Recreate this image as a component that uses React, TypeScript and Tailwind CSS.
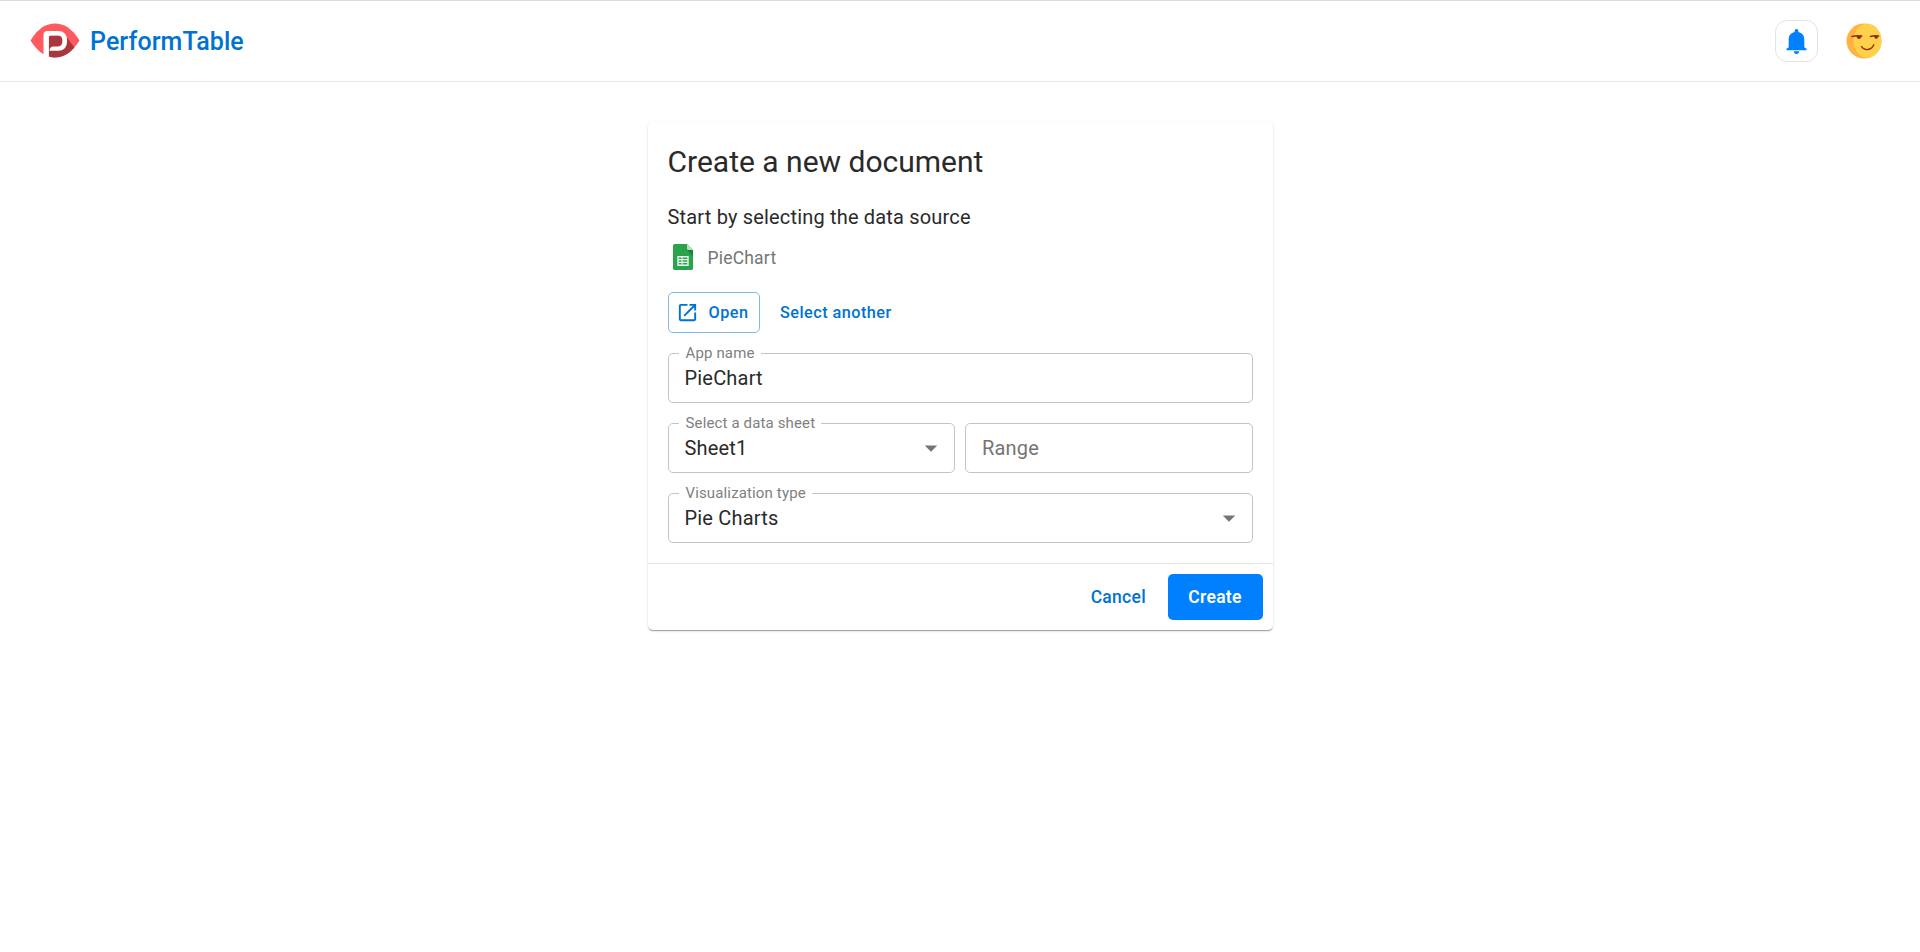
import type { ReactNode } from "react";

function Logo() {
  return (
    <svg className="-mt-px h-[35px] w-[50px] shrink-0" viewBox="0 0 50 35">
      <path d="M.5 17.6C8 5 16.500 .5 25 .5S42 5 49.500 17.600C42 30 33.500 34.500 25 34.500S8 30 .5 17.600Z" fill="#ff5a5f" />
      <path d="M33.600 10 44.400 24.600C38 32 31 34.500 25 34.500Q21.800 34.500 19 33.600V28Z" fill="#a8383d" />
      <path d="M18.500 13h9.500q4 0 4 4.200t-4 4.200h-9.500Z" fill="#a8383d" />
      <path d="M18.500 13H28V24H22L18.500 28Z" fill="#a8383d" />
      <path
        d="M13.500 31.800V12Q13.500 8.100 17.500 8.100H28Q37.100 8.100 37.100 18T28 27.800H19.500Q19.600 24 22.800 23.400H28Q32.400 23.400 32.400 18T28 12.600H20.500Q18.900 12.600 18.900 14.300V33.700Q16 33.200 13.500 31.800Z"
        fill="#fff"
      />
    </svg>
  );
}

function Bell() {
  return (
    <svg className="h-[25px] w-[21px]" viewBox="0 0 21 25" fill="#007fff">
      <path d="M8.600 2a1.900 1.900 0 0 1 3.800 0v.9c3.600.8 5.900 3.600 5.900 7.300v8l2.200 1.500v1.600H.5v-1.600l2.200-1.500v-8c0-3.700 2.300-6.500 5.900-7.300Z" />
      <path d="M7.700 22.300h5.600Q13 25 10.500 25T7.700 22.300Z" />
    </svg>
  );
}

function Smirk() {
  return (
    <svg className="-mt-px h-[36px] w-[36px]" viewBox="0 0 36 36">
      <circle cx="18" cy="18" r="17.500" fill="#ffb340" />
      <ellipse cx="21.500" cy="17.800" rx="14" ry="17" fill="#ffd04a" />
      <g stroke="#8f2d12" fill="none" strokeLinecap="round">
        <path d="M6 13.500q5-1.300 9.700-.4" strokeWidth="1.500" />
        <path d="M24.500 13.500q4-1.300 8-.4" strokeWidth="1.500" />
        <path d="M15.500 23.500c2.800 4.700 10 4 12.300-1.700" strokeWidth="1.400" />
      </g>
      <path d="M10.500 13h5q-.4 3-2.500 3t-2.500-3ZM28 13h4.300q-.4 3-2.100 3T28 13Z" fill="#8f2d12" />
    </svg>
  );
}

function SheetsIcon() {
  return (
    <svg className="h-[26px] w-5" viewBox="0 0 20 26">
      <path d="M1.700 0H14l6 6v18.300q0 1.700-1.700 1.700H1.700Q0 26 0 24.300V1.700Q0 0 1.700 0Z" fill="#2ba24c" />
      <path d="M14 6h6v6Z" fill="#188038" />
      <path d="M14 0l6 6h-4.500Q14 6 14 4.500Z" fill="#b7dfc3" />
      <path d="M4.300 12h11.400v10H4.300ZM5.700 13.400v1.500h2.800v-1.500ZM9.700 13.400v1.500h4.600v-1.500ZM5.700 16.200v1.500h2.800v-1.500ZM9.700 16.200v1.500h4.600v-1.500ZM5.700 19.100v1.500h2.800v-1.500ZM9.700 19.100v1.500h4.600v-1.500Z" fill="#e9f6ed" fillRule="evenodd" />
    </svg>
  );
}

function OpenIcon() {
  return (
    <svg className="h-[23px] w-[23px]" viewBox="0 0 24 24" fill="#0073d1">
      <path d="M19 19H5V5h7V3H5c-1.110 0-2 .9-2 2v14c0 1.100.89 2 2 2h14c1.100 0 2-.9 2-2v-7h-2v7zM14 3v2h3.590l-9.830 9.830 1.410 1.410L19 6.410V10h2V3h-7z" />
    </svg>
  );
}

function Field({ label, children, select }: { label?: string; children: ReactNode; select?: boolean }) {
  return (
    <fieldset className="relative flex h-[50px] min-w-0 flex-1 items-center rounded-[5px] border border-[#c4c4c4] pr-[8px] pl-[16px] text-[20px] tracking-[0.188px]">
      {label && (
        <span className="absolute -top-[11px] left-[10px] bg-white pr-[6px] pl-[7px] text-[15px] leading-5 tracking-[0.141px] whitespace-nowrap text-[#808080]">
          {label}
        </span>
      )}
      <div className="flex w-full items-center justify-between leading-[30px]">
        {children}
        {select && (
          <svg className="h-[30px] w-[30px]" viewBox="0 0 24 24" fill="#757575">
            <path d="M7 10l5 5 5-5z" />
          </svg>
        )}
      </div>
    </fieldset>
  );
}

export default function App() {
  return (
    <div className="min-h-[952px] bg-white font-[Roboto,sans-serif] text-[#2a2a2a]">
      <header className="flex h-[82px] items-center justify-between border-t border-b border-t-[#dadada] border-b-[#e7e7e7] pr-[38px] pl-[30px]">
        <div className="flex items-center gap-[10px]">
          <Logo />
          <span className="pt-[2px] text-[25px] leading-10 font-medium tracking-[0.09px] text-[#0073d1]">PerformTable</span>
        </div>
        <div className="flex items-center gap-[28px]">
          <button className="flex h-[42px] w-[43px] items-center justify-center rounded-[12px] border border-[#e0e3e7]">
            <Bell />
          </button>
          <Smirk />
        </div>
      </header>

      <main className="pt-10">
        <section className="mx-auto w-[625px] rounded-[5px] bg-white shadow-[0_2px_1px_-1px_rgba(0,0,0,0.2),0_1px_1px_0_rgba(0,0,0,0.14),0_1px_3px_0_rgba(0,0,0,0.12)]">
          <div className="flex flex-col p-5">
            <h1 className="text-[30px] leading-10">Create a new document</h1>
            <p className="mt-5 text-[20px] leading-[30px] tracking-[0.178px]">Start by selecting the data source</p>
            <div className="mt-[10px] flex h-[30px] items-center">
              <span className="flex w-[30px] justify-center">
                <SheetsIcon />
              </span>
              <span className="ml-[10px] pt-[2px] text-[17.5px] leading-[25px] tracking-[0.2px] text-[#757575]">PieChart</span>
            </div>
            <div className="mt-5 flex h-[41px] items-center text-[16.25px] font-medium text-[#0073d1]">
              <button className="flex h-[41px] w-[92px] items-center rounded-[5px] border border-[#80b9e8] pl-[7px] tracking-[0.46px]">
                <OpenIcon />
                <span className="ml-[10px] pt-[2px]">Open</span>
              </button>
              <button className="ml-[20.5px] pt-[2px] tracking-[0.46px]">Select another</button>
            </div>
            <div className="mt-5 flex">
              <Field label="App name">PieChart</Field>
            </div>
            <div className="mt-5 flex gap-[10px]">
              <Field label="Select a data sheet" select>
                Sheet1
              </Field>
              <Field>
                <span className="text-[#757575]">Range</span>
              </Field>
            </div>
            <div className="mt-5 flex">
              <Field label="Visualization type" select>
                Pie Charts
              </Field>
            </div>
          </div>
          <footer className="flex h-[67px] items-center justify-end border-t border-[#e4e4e4] pr-[10px] text-[17.5px] font-medium tracking-[0.3px]">
            <button className="mr-[21.5px] text-[#0073d1]">Cancel</button>
            <button className="h-[46px] w-[95px] rounded-[5px] bg-[#007fff] font-semibold text-white">Create</button>
          </footer>
        </section>
      </main>
    </div>
  );
}
